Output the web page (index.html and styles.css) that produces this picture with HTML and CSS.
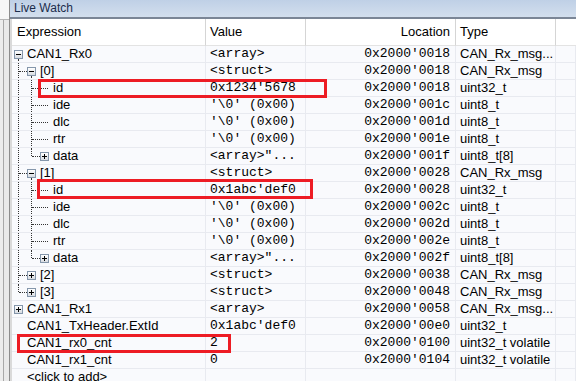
FILE: index.html
```html
<!DOCTYPE html>
<html lang="en">
<head>
    <meta charset="UTF-8">
    <title>Live Watch</title>
    <link rel="stylesheet" href="styles.css">
</head>
<body>
    <div class="screen">
        <div class="side">
            <div class="side-top"></div>
            <div class="side-body"></div>
        </div>
        <div class="panel">
            <div class="titlebar">Live Watch</div>
            <div class="list">
                <div class="row head">
                    <div class="cell expr-head">Expression</div>
                    <div class="cell val-head">Value</div>
                    <div class="cell loc-head">Location</div>
                    <div class="cell type-head">Type</div>
                    <div class="cell last"></div>
                </div>

                <div class="row">
                    <div class="cell expr"><span class="g g-box g-open"><i class="btn minus"></i></span><span class="name">CAN1_Rx0</span></div>
                    <div class="cell val">&lt;array&gt;</div>
                    <div class="cell loc">0x2000'0018</div>
                    <div class="cell type">CAN_Rx_msg...</div>
                    <div class="cell"></div>
                </div>
                <div class="row">
                    <div class="cell expr"><span class="g g-t"></span><span class="g g-box g-open g-join"><i class="btn minus"></i></span><span class="name">[0]</span></div>
                    <div class="cell val">&lt;struct&gt;</div>
                    <div class="cell loc">0x2000'0018</div>
                    <div class="cell type">CAN_Rx_msg</div>
                    <div class="cell"></div>
                </div>
                <div class="row">
                    <div class="cell expr"><span class="g g-v"></span><span class="g g-t"></span><span class="g g-leaf"></span><span class="name">id</span></div>
                    <div class="cell val">0x1234'5678</div>
                    <div class="cell loc">0x2000'0018</div>
                    <div class="cell type">uint32_t</div>
                    <div class="cell"></div>
                </div>
                <div class="row">
                    <div class="cell expr"><span class="g g-v"></span><span class="g g-t"></span><span class="g g-leaf"></span><span class="name">ide</span></div>
                    <div class="cell val">'\0' (0x00)</div>
                    <div class="cell loc">0x2000'001c</div>
                    <div class="cell type">uint8_t</div>
                    <div class="cell"></div>
                </div>
                <div class="row">
                    <div class="cell expr"><span class="g g-v"></span><span class="g g-t"></span><span class="g g-leaf"></span><span class="name">dlc</span></div>
                    <div class="cell val">'\0' (0x00)</div>
                    <div class="cell loc">0x2000'001d</div>
                    <div class="cell type">uint8_t</div>
                    <div class="cell"></div>
                </div>
                <div class="row">
                    <div class="cell expr"><span class="g g-v"></span><span class="g g-t"></span><span class="g g-leaf"></span><span class="name">rtr</span></div>
                    <div class="cell val">'\0' (0x00)</div>
                    <div class="cell loc">0x2000'001e</div>
                    <div class="cell type">uint8_t</div>
                    <div class="cell"></div>
                </div>
                <div class="row">
                    <div class="cell expr"><span class="g g-v"></span><span class="g g-l"></span><span class="g g-box g-join"><i class="btn plus"></i></span><span class="name">data</span></div>
                    <div class="cell val">&lt;array&gt;"...</div>
                    <div class="cell loc">0x2000'001f</div>
                    <div class="cell type">uint8_t[8]</div>
                    <div class="cell"></div>
                </div>
                <div class="row">
                    <div class="cell expr"><span class="g g-t"></span><span class="g g-box g-open g-join"><i class="btn minus"></i></span><span class="name">[1]</span></div>
                    <div class="cell val">&lt;struct&gt;</div>
                    <div class="cell loc">0x2000'0028</div>
                    <div class="cell type">CAN_Rx_msg</div>
                    <div class="cell"></div>
                </div>
                <div class="row">
                    <div class="cell expr"><span class="g g-v"></span><span class="g g-t"></span><span class="g g-leaf"></span><span class="name">id</span></div>
                    <div class="cell val">0x1abc'def0</div>
                    <div class="cell loc">0x2000'0028</div>
                    <div class="cell type">uint32_t</div>
                    <div class="cell"></div>
                </div>
                <div class="row">
                    <div class="cell expr"><span class="g g-v"></span><span class="g g-t"></span><span class="g g-leaf"></span><span class="name">ide</span></div>
                    <div class="cell val">'\0' (0x00)</div>
                    <div class="cell loc">0x2000'002c</div>
                    <div class="cell type">uint8_t</div>
                    <div class="cell"></div>
                </div>
                <div class="row">
                    <div class="cell expr"><span class="g g-v"></span><span class="g g-t"></span><span class="g g-leaf"></span><span class="name">dlc</span></div>
                    <div class="cell val">'\0' (0x00)</div>
                    <div class="cell loc">0x2000'002d</div>
                    <div class="cell type">uint8_t</div>
                    <div class="cell"></div>
                </div>
                <div class="row">
                    <div class="cell expr"><span class="g g-v"></span><span class="g g-t"></span><span class="g g-leaf"></span><span class="name">rtr</span></div>
                    <div class="cell val">'\0' (0x00)</div>
                    <div class="cell loc">0x2000'002e</div>
                    <div class="cell type">uint8_t</div>
                    <div class="cell"></div>
                </div>
                <div class="row">
                    <div class="cell expr"><span class="g g-v"></span><span class="g g-l"></span><span class="g g-box g-join"><i class="btn plus"></i></span><span class="name">data</span></div>
                    <div class="cell val">&lt;array&gt;"...</div>
                    <div class="cell loc">0x2000'002f</div>
                    <div class="cell type">uint8_t[8]</div>
                    <div class="cell"></div>
                </div>
                <div class="row">
                    <div class="cell expr"><span class="g g-t"></span><span class="g g-box g-join"><i class="btn plus"></i></span><span class="name">[2]</span></div>
                    <div class="cell val">&lt;struct&gt;</div>
                    <div class="cell loc">0x2000'0038</div>
                    <div class="cell type">CAN_Rx_msg</div>
                    <div class="cell"></div>
                </div>
                <div class="row">
                    <div class="cell expr"><span class="g g-l"></span><span class="g g-box g-join"><i class="btn plus"></i></span><span class="name">[3]</span></div>
                    <div class="cell val">&lt;struct&gt;</div>
                    <div class="cell loc">0x2000'0048</div>
                    <div class="cell type">CAN_Rx_msg</div>
                    <div class="cell"></div>
                </div>
                <div class="row">
                    <div class="cell expr"><span class="g g-box"><i class="btn plus"></i></span><span class="name">CAN1_Rx1</span></div>
                    <div class="cell val">&lt;array&gt;</div>
                    <div class="cell loc">0x2000'0058</div>
                    <div class="cell type">CAN_Rx_msg...</div>
                    <div class="cell"></div>
                </div>
                <div class="row">
                    <div class="cell expr"><span class="g"></span><span class="name">CAN1_TxHeader.ExtId</span></div>
                    <div class="cell val">0x1abc'def0</div>
                    <div class="cell loc">0x2000'00e0</div>
                    <div class="cell type">uint32_t</div>
                    <div class="cell"></div>
                </div>
                <div class="row">
                    <div class="cell expr"><span class="g"></span><span class="name">CAN1_rx0_cnt</span></div>
                    <div class="cell val">2</div>
                    <div class="cell loc">0x2000'0100</div>
                    <div class="cell type">uint32_t volatile</div>
                    <div class="cell"></div>
                </div>
                <div class="row">
                    <div class="cell expr"><span class="g"></span><span class="name">CAN1_rx1_cnt</span></div>
                    <div class="cell val">0</div>
                    <div class="cell loc">0x2000'0104</div>
                    <div class="cell type">uint32_t volatile</div>
                    <div class="cell"></div>
                </div>
                <div class="row">
                    <div class="cell expr"><span class="g"></span><span class="name">&lt;click to add&gt;</span></div>
                    <div class="cell val"></div>
                    <div class="cell loc"></div>
                    <div class="cell type"></div>
                    <div class="cell"></div>
                </div>
            </div>
        </div>

        <!-- red highlight frames drawn over the list -->
        <div class="mark mark-id0"></div>
        <div class="mark mark-id1"></div>
        <div class="mark mark-cnt"></div>
    </div>
</body>
</html>
```

FILE: styles.css
```css
body {
    margin: 0;
    font-family: "Liberation Sans", Arial, sans-serif;
    font-size: 13px;
    color: #000;
    background: #fff;
}
.screen {
    position: relative;
    display: flex;
    width: 576px;
    height: 381px;
    overflow: hidden;
}

/* left neighbour window edge */
.side {
    width: 9px;
    border-right: 1px solid #8c8c8c;
    background: #ececec;
    display: flex;
    flex-direction: column;
}
.side-top {
    height: 19px;
    background: #f7f7f7;
    border-bottom: 1px solid #b5b5b5;
}
.side-body {
    flex: 1;
    margin-left: 3px;
    border-left: 1px solid #a8a8a8;
    background: #e9e9e9;
}

.panel {
    flex: 1;
    display: flex;
    flex-direction: column;
    min-width: 0;
}
.titlebar {
    height: 17px;
    padding-left: 4px;
    background: linear-gradient(#bfd0e6, #d3dfee);
    border-bottom: 2px solid #7b8696;
    font-size: 12px;
    line-height: 17px;
    color: #1b2d4c;
}
.list {
    flex: 1;
    border-left: 2px solid #dadada;
    background: #f9fafd;
}

.row {
    display: grid;
    grid-template-columns: 194px 100px 150px 100px 1fr;
    height: 17px;
}
.cell {
    border-right: 1px solid #e8eaf0;
    border-bottom: 1px solid #e8eaf0;
    line-height: 16px;
    white-space: nowrap;
    overflow: hidden;
}
.head {
    height: 27px;
}
.head .cell {
    background: #fff;
    line-height: 26px;
    border-right-color: #d5d5d5;
    border-bottom-color: #e3e3e3;
}
.head .last {
    border-right: none;
}
.expr-head { padding-left: 5px; }
.val-head { padding-left: 4px; }
.loc-head { text-align: right; padding-right: 5px; }
.type-head { padding-left: 4px; }

.val, .loc {
    font-family: "Liberation Mono", "Courier New", monospace;
}
.val { padding-left: 4px; }
.loc { text-align: right; padding-right: 5px; }
.type { padding-left: 4px; }

/* tree column */
.expr {
    display: flex;
}
.name {
    margin-left: 2px;
}
.g {
    position: relative;
    flex: none;
    width: 13px;
    height: 16px;
}
.g-v::before,
.g-t::before,
.g-l::before,
.g-open::before {
    content: "";
    position: absolute;
    left: 6px;
    top: 0;
    bottom: -1px;
    border-left: 1px dotted #333;
}
.g-l::before {
    bottom: auto;
    height: 8px;
}
.g-open::before {
    top: 13px;
}
.g-t::after,
.g-l::after,
.g-leaf::after,
.g-join::after {
    content: "";
    position: absolute;
    top: 8px;
    left: 7px;
    right: 0;
    border-top: 1px dotted #333;
}
.g-leaf::after {
    left: 1px;
    right: 3px;
}
.g-join::after {
    left: 1px;
    right: auto;
    width: 1px;
}

.btn {
    position: absolute;
    left: 2px;
    top: 4px;
    width: 7px;
    height: 7px;
    border: 1px solid #8496ab;
    background: linear-gradient(#ffffff, #d8dce2);
}
.btn::before,
.btn::after {
    content: "";
    position: absolute;
    background: #000;
}
.btn::before {
    left: 1px;
    top: 3px;
    width: 5px;
    height: 1px;
}
.plus::after {
    left: 3px;
    top: 1px;
    width: 1px;
    height: 5px;
}

/* highlight frames */
.mark {
    position: absolute;
    box-sizing: border-box;
    border: 3px solid #ed1c24;
}
.mark-id0 {
    left: 38px;
    top: 79px;
    width: 289px;
    height: 19px;
}
.mark-id1 {
    left: 37px;
    top: 179px;
    width: 276px;
    height: 20px;
}
.mark-cnt {
    left: 17px;
    top: 334px;
    width: 214px;
    height: 19px;
}
```
